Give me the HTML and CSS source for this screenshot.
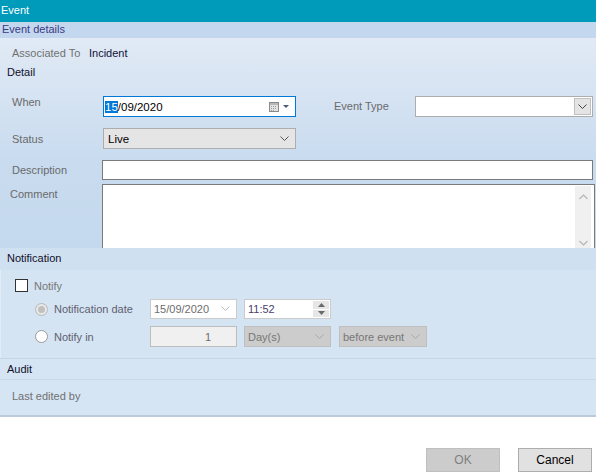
FILE: index.html
```html
<!DOCTYPE html>
<html>
<head>
<meta charset="utf-8">
<link rel="stylesheet" href="styles.css">
</head>
<body>
<div class="window">
  <div class="titlebar">Event</div>
  <div class="tabbar">Event details</div>

  <div class="details">
    <div class="assoc"><span class="lbl-assoc">Associated To</span><span class="val">Incident</span></div>
    <div class="group-title">Detail</div>

    <div class="row row-when">
      <span class="lbl lbl-top">When</span>
      <div class="datebox">
        <span class="dtext"><span class="hl">15</span>/09/2020</span>
        <span class="calicon">
          <svg width="20" height="11" viewBox="0 0 20 11">
            <rect x="0.5" y="0.5" width="9" height="9" fill="#e4e4e4" stroke="#8a8a8a"/>
            <rect x="1" y="1" width="8" height="2" fill="#b8b8b8"/>
            <g fill="#9c9c9c">
              <rect x="2" y="4" width="1" height="1"/><rect x="4" y="4" width="1" height="1"/><rect x="6" y="4" width="1" height="1"/>
              <rect x="2" y="6" width="1" height="1"/><rect x="4" y="6" width="1" height="1"/><rect x="6" y="6" width="1" height="1"/>
              <rect x="2" y="8" width="1" height="1"/><rect x="4" y="8" width="1" height="1"/>
            </g>
            <polygon points="14,3 20,3 17,6" fill="#4a5a78"/>
          </svg>
        </span>
      </div>
      <span class="lbl lbl-type">Event Type</span>
      <div class="combo">
        <span class="dd-btn">
          <svg width="9" height="6" viewBox="0 0 9 6"><polyline points="0.5,0.5 4.5,4.5 8.5,0.5" fill="none" stroke="#444" stroke-width="1"/></svg>
        </span>
      </div>
    </div>

    <div class="row row-status">
      <span class="lbl">Status</span>
      <div class="select">
        <span>Live</span>
        <svg width="9" height="6" viewBox="0 0 9 6"><polyline points="0.5,0.5 4.5,4.5 8.5,0.5" fill="none" stroke="#555" stroke-width="1"/></svg>
      </div>
    </div>

    <div class="row row-desc">
      <span class="lbl lbl-desc">Description</span>
      <div class="textbox"></div>
    </div>

    <div class="row row-comment">
      <span class="lbl lbl-comment">Comment</span>
      <div class="textarea">
        <div class="vscroll">
          <svg width="9" height="6" viewBox="0 0 9 6"><polyline points="0.5,5 4.5,1 8.5,5" fill="none" stroke="#b4b4b4" stroke-width="1.2"/></svg>
          <svg width="9" height="6" viewBox="0 0 9 6"><polyline points="0.5,1 4.5,5 8.5,1" fill="none" stroke="#b4b4b4" stroke-width="1.2"/></svg>
        </div>
      </div>
    </div>
  </div>

  <div class="sect-head notif-head">Notification</div>
  <div class="notif">
    <div class="nrow nrow-check">
      <span class="checkbox"></span>
      <span class="ntext">Notify</span>
    </div>
    <div class="nrow nrow-radio">
      <span class="radio radio-on"><span class="dot"></span></span>
      <span class="nlabel">Notification date</span>
      <div class="nfield nfield-white">
        <span class="gray">15/09/2020</span>
        <svg width="9" height="6" viewBox="0 0 9 6"><polyline points="0.5,0.5 4.5,4.5 8.5,0.5" fill="none" stroke="#bdbdbd" stroke-width="1"/></svg>
      </div>
      <div class="nfield nfield-white time">
        <span class="timetext">11:52</span>
        <span class="spin">
          <span class="spinbtn"><svg width="7" height="4" viewBox="0 0 7 4"><polygon points="0,4 7,4 3.5,0" fill="#6a6a6a"/></svg></span>
          <span class="spinbtn"><svg width="7" height="4" viewBox="0 0 7 4"><polygon points="0,0 7,0 3.5,4" fill="#6a6a6a"/></svg></span>
        </span>
      </div>
    </div>
    <div class="nrow nrow-radio">
      <span class="radio"></span>
      <span class="nlabel">Notify in</span>
      <div class="nfield nfield-num"><span class="gray">1</span></div>
      <div class="nfield nfield-dis">
        <span>Day(s)</span>
        <svg width="9" height="6" viewBox="0 0 9 6"><polyline points="0.5,0.5 4.5,4.5 8.5,0.5" fill="none" stroke="#a8a8a8" stroke-width="1"/></svg>
      </div>
      <div class="nfield nfield-dis before">
        <span>before event</span>
        <svg width="9" height="6" viewBox="0 0 9 6"><polyline points="0.5,0.5 4.5,4.5 8.5,0.5" fill="none" stroke="#a8a8a8" stroke-width="1"/></svg>
      </div>
    </div>
  </div>

  <div class="sect-head audit-head">Audit</div>
  <div class="audit"><span class="lbl">Last edited by</span></div>

  <div class="footer">
    <button class="btn btn-ok">OK</button>
    <button class="btn btn-cancel">Cancel</button>
  </div>
</div>
</body>
</html>
```

FILE: styles.css
```css
* { box-sizing: border-box; }
html, body { margin: 0; padding: 0; background: #ffffff; }
body {
  font-family: "Liberation Sans", Arial, sans-serif;
  font-size: 11px;
  color: #000;
}
.window {
  width: 596px;
  height: 474px;
  display: flex;
  flex-direction: column;
  overflow: hidden;
}
.titlebar {
  height: 22px;
  line-height: 21px;
  background: #009abb;
  color: #ffffff;
  font-size: 11px;
  padding-left: 1px;
}
.tabbar {
  height: 16px;
  line-height: 15px;
  background: #c3d8ee;
  color: #3a3a86;
  font-size: 11px;
  padding-left: 2px;
}
.details {
  height: 210px;
  overflow: hidden;
  background: linear-gradient(#e1eaf5, #c8dbef 60%, #c5d9ee);
}
.assoc {
  height: 25px;
  padding: 8px 0 0 12px;
  display: flex;
  line-height: 14px;
}
.lbl-assoc { color: #707070; width: 77px; }
.val { color: #10103a; }
.group-title {
  height: 18px;
  line-height: 18px;
  padding-left: 7px;
  color: #10102a;
}
.row {
  display: flex;
  padding-left: 12px;
}
.lbl {
  color: #6a6a6a;
  width: 91px;
  flex: none;
}
.row-when { margin-top: 15px; height: 21px; align-items: flex-start; }
.lbl-top { line-height: 12px; padding-top: 0; }
.datebox {
  width: 193px;
  height: 21px;
  border: 1px solid #0078d7;
  background: #fff;
  display: flex;
  align-items: center;
  padding-left: 1px;
}
.dtext { font-size: 11.5px; color: #000; flex: 1; line-height: 16px; }
.hl { background: #0078d7; color: #fff; }
.calicon { display: flex; margin-right: 6px; margin-top: 1px; }
.lbl-type {
  width: 81px;
  margin-left: 38px;
  line-height: 21px;
  color: #6a6a6a;
}
.combo {
  width: 178px;
  height: 21px;
  border: 1px solid #adadad;
  background: #fff;
  display: flex;
  justify-content: flex-end;
  padding: 1px;
}
.dd-btn {
  width: 17px;
  height: 17px;
  background: #e4e4e4;
  border: 1px solid #c0c0c0;
  display: flex;
  align-items: center;
  justify-content: center;
}
.row-status { margin-top: 11px; height: 21px; align-items: center; }
.select {
  width: 193px;
  height: 21px;
  background: #e5e5e5;
  border: 1px solid #adadad;
  display: flex;
  align-items: center;
  justify-content: space-between;
  padding: 0 6px 0 4px;
  font-size: 11.5px;
}
.row-desc { margin-top: 11px; height: 20px; align-items: center; }
.lbl-desc { width: 90px; }
.textbox {
  width: 491px;
  height: 20px;
  background: #fff;
  border: 1px solid #7a7a7a;
}
.row-comment { margin-top: 4px; padding-left: 10px; }
.lbl-comment { width: 92px; padding-top: 4px; }
.textarea {
  width: 493px;
  height: 80px;
  background: #fff;
  border: 1px solid #7a7a7a;
  display: flex;
  justify-content: flex-end;
  padding: 1px 3px 0 0;
}
.vscroll {
  width: 16px;
  background: #f0f0f0;
  display: flex;
  flex-direction: column;
  align-items: center;
  justify-content: space-between;
  padding: 8px 0 18px;
  height: 78px;
}
.sect-head {
  height: 22px;
  line-height: 20px;
  padding-left: 7px;
  color: #10102a;
}
.notif-head { background: #cfe0f1; }
.notif {
  height: 88px;
  background: #d4e4f3;
  border-left: 1px solid #e2ecf7;
  padding-top: 9px;
}
.nrow { display: flex; align-items: center; }
.nrow-check { height: 13px; padding-left: 14px; }
.checkbox {
  width: 13px;
  height: 13px;
  border: 1px solid #333;
  background: #fff;
}
.ntext { color: #777; margin-left: 6px; }
.nrow-radio { margin-top: 7px; height: 20px; padding-left: 34px; }
.nrow-radio + .nrow-radio { height: 21px; margin-top: 7px; }
.radio {
  width: 13px;
  height: 13px;
  border-radius: 50%;
  border: 1px solid #9a9a9a;
  background: #fff;
  display: flex;
  align-items: center;
  justify-content: center;
}
.radio-on { background: #e8e8e8; border-color: #b8b8b8; }
.dot { width: 7px; height: 7px; border-radius: 50%; background: #c0c0c0; }
.nlabel {
  width: 96px;
  margin-left: 6px;
  font-size: 11px;
  color: #5f5f6f;
}
.nfield {
  width: 87px;
  height: 100%;
  border: 1px solid #c4c4c4;
  display: flex;
  align-items: center;
  justify-content: space-between;
  padding: 0 6px 0 3px;
  font-size: 11px;
  margin-right: 7px;
}
.nfield-white { background: #fff; border-color: #cbcbcb; }
.gray { color: #6d6d6d; }
.time { padding-right: 1px; }
.timetext { color: #4a3e6a; }
.spin {
  width: 16px;
  height: 16px;
  display: flex;
  flex-direction: column;
  gap: 1px;
}
.spinbtn {
  flex: 1;
  background: #e6e6e6;
  display: flex;
  align-items: center;
  justify-content: center;
}
.nfield-num {
  background: #f0f0f0;
  border-color: #bdbdbd;
  justify-content: flex-end;
  padding-right: 25px;
}
.nfield-dis {
  background: #cccccc;
  border-color: #bfbfbf;
  color: #777;
}
.before { width: 88px; margin-left: 1px; }
.audit-head {
  height: 22px;
  background: #d5e5f4;
  border-top: 1px solid #c6d6e6;
  border-bottom: 1px solid #c9d9e9;
  line-height: 20px;
}
.audit {
  height: 37px;
  background: #d5e5f4;
  border-bottom: 2px solid #bccbdc;
  padding: 10px 0 0 12px;
}
.audit .lbl { color: #707070; width: auto; }
.footer {
  flex: 1;
  background: #ffffff;
  display: flex;
  align-items: flex-start;
  justify-content: flex-end;
  padding: 31px 4px 0 0;
}
.btn {
  width: 74px;
  height: 24px;
  font-family: "Liberation Sans", Arial, sans-serif;
  font-size: 12px;
  margin-left: 18px;
  border: 1px solid #adadad;
  background: #e1e1e1;
  color: #000;
  padding: 0;
}
.btn-ok { background: #cccccc; border-color: #bfbfbf; color: #808080; }
```
